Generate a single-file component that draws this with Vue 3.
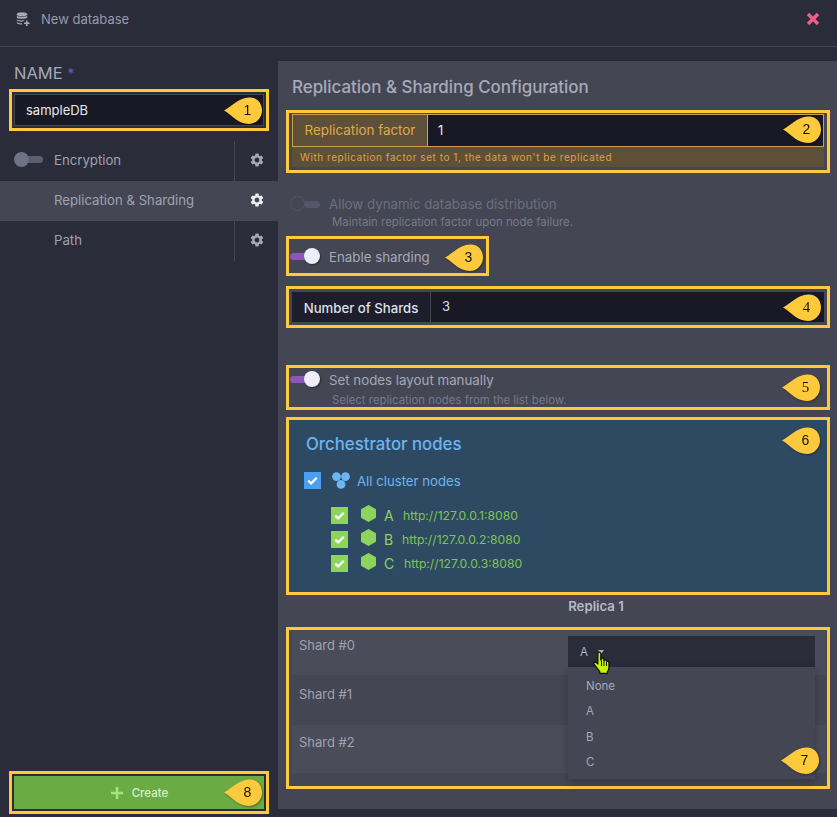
<script setup>
const menu = [
  { label: 'Encryption', toggle: true },
  { label: 'Replication & Sharding', active: true },
  { label: 'Path' }
]

const nodes = [
  { tag: 'A', url: 'http://127.0.0.1:8080', shift: 0 },
  { tag: 'B', url: 'http://127.0.0.2:8080', shift: -1 },
  { tag: 'C', url: 'http://127.0.0.3:8080', shift: 1 }
]

const shards = ['Shard #0', 'Shard #1', 'Shard #2']
const options = ['None', 'A', 'B', 'C']

const gear = 'M19.14 12.94c.04-.3.06-.61.06-.94 0-.32-.02-.64-.07-.94l2.03-1.58c.18-.14.23-.41.12-.61l-1.92-3.32c-.12-.22-.37-.29-.59-.22l-2.39.96c-.5-.38-1.03-.7-1.62-.94l-.36-2.54c-.04-.24-.24-.41-.48-.41h-3.84c-.24 0-.43.17-.47.41l-.36 2.54c-.59.24-1.13.57-1.62.94l-2.39-.96c-.22-.08-.47 0-.59.22L2.74 8.87c-.12.21-.08.47.12.61l2.03 1.58c-.05.3-.09.63-.09.94s.02.64.07.94l-2.03 1.58c-.18.14-.23.41-.12.61l1.92 3.32c.12.22.37.29.59.22l2.39-.96c.5.38 1.03.7 1.62.94l.36 2.54c.05.24.24.41.48.41h3.84c.24 0 .44-.17.47-.41l.36-2.54c.59-.24 1.13-.56 1.62-.94l2.39.96c.22.08.47 0 .59-.22l1.92-3.32c.12-.22.07-.47-.12-.61l-2.01-1.58zM12 15.6c-1.98 0-3.6-1.62-3.6-3.6s1.62-3.6 3.6-3.6 3.6 1.62 3.6 3.6-1.62 3.6-3.6 3.6z'
const drop = 'M0 13.5C8 9.5 14 1 25 .5 33 0 38 6 38 13.5 38 21 32 27 25 27 14 27 8 18 0 13.5Z'
</script>

<template>
  <div class="app">
    <header class="top">
      <div class="top-title">
        <svg class="db-icon" viewBox="0 0 14 14" width="14" height="14">
          <ellipse cx="6" cy="2.2" rx="5.2" ry="2" fill="#a6a8b6" />
          <path d="M.8 3.8c1 1.4 9.400 1.400 10.400 0v2C10.200 7.200 1.800 7.200.8 5.800z" fill="#a6a8b6" />
          <path d="M.8 7.200c1 1.400 6.500 1.500 8 .6L7 9.500c-3 .4-5.400-.2-6.200-1z" fill="#a6a8b6" />
          <path d="M.8 10c1 .9 3.200 1.300 5.200 1.200v1.300c-2.400 0-4.400-.5-5.200-1.300z" fill="#a6a8b6" />
          <path d="M10 8.500h1.600v2h2v1.500h-2v2H10v-2H8v-1.500h2z" fill="#a6a8b6" />
        </svg>
        <span>New database</span>
      </div>
      <svg class="close" viewBox="0 0 14 14" width="14" height="14">
        <path d="M2 2l10 10M12 2L2 12" stroke="#ef5f85" stroke-width="3.400" />
      </svg>
    </header>

    <div class="main">
      <aside class="side">
        <div class="name-label">NAME <span class="star">*</span></div>
        <div class="mark name-mark">
          <div class="name-input">sampleDB</div>
          <span class="drop drop-name">
            <svg viewBox="0 0 38 27"><path :d="drop" /></svg><b>1</b>
          </span>
        </div>

        <nav class="menu">
          <div v-for="item in menu" :key="item.label" class="menu-row" :class="{ active: item.active }">
            <span v-if="item.toggle" class="tog-off"><i></i></span>
            <span class="menu-label">{{ item.label }}</span>
            <span class="menu-gear">
              <svg viewBox="0 0 24 24" width="16" height="16"><path :d="gear" /></svg>
            </span>
          </div>
        </nav>

        <div class="mark create-mark">
          <button class="create">
            <svg viewBox="0 0 14 14" width="14" height="14"><path d="M7 1v12M1 7h12" stroke="#a5e57b" stroke-width="2.600" /></svg>
            <span>Create</span>
          </button>
          <span class="drop drop-name">
            <svg viewBox="0 0 38 27"><path :d="drop" /></svg><b>8</b>
          </span>
        </div>
      </aside>

      <section class="panel">
        <h2 class="title">Replication &amp; Sharding Configuration</h2>

        <div class="mark box-repl">
          <div class="warn">
            <div class="warn-row">
              <span class="warn-label">Replication factor</span>
              <span class="warn-value">1</span>
            </div>
            <p class="warn-text">With replication factor set to 1, the data won't be replicated</p>
          </div>
          <span class="drop drop-wide">
            <svg viewBox="0 0 38 27"><path :d="drop" /></svg><b>2</b>
          </span>
        </div>

        <div class="dynamic">
          <div class="switch-row">
            <span class="tog-dis"><i></i></span>
            <span class="dis-label">Allow dynamic database distribution</span>
          </div>
          <p class="dis-sub">Maintain replication factor upon node failure.</p>
        </div>

        <div class="mark box-shard">
          <span class="tog-on"><i></i></span>
          <span class="switch-label">Enable sharding</span>
          <span class="drop drop-3">
            <svg viewBox="0 0 38 27"><path :d="drop" /></svg><b>3</b>
          </span>
        </div>

        <div class="mark box-count">
          <div class="count">
            <span class="count-label">Number of Shards</span>
            <span class="count-value">3</span>
          </div>
          <span class="drop drop-4">
            <svg viewBox="0 0 38 27"><path :d="drop" /></svg><b class="serif">4</b>
          </span>
        </div>

        <div class="mark box-layout">
          <div class="switch-row">
            <span class="tog-on"><i></i></span>
            <span class="switch-label">Set nodes layout manually</span>
          </div>
          <p class="layout-sub">Select replication nodes from the list below.</p>
          <span class="drop drop-5">
            <svg viewBox="0 0 38 27"><path :d="drop" /></svg><b class="serif">5</b>
          </span>
        </div>

        <div class="mark box-nodes">
          <h3 class="orch">Orchestrator nodes</h3>
          <div class="all-row">
            <span class="check blue">
              <svg viewBox="0 0 16 16"><path d="M4 8.200l2.700 2.600L12 5.400" /></svg>
            </span>
            <svg class="cluster" viewBox="0 0 18 17" width="18" height="17">
              <circle cx="4.500" cy="4.600" r="4.400" />
              <circle cx="13.500" cy="4.600" r="4.400" />
              <circle cx="9" cy="12.400" r="4.400" />
            </svg>
            <span class="all-label">All cluster nodes</span>
          </div>
          <div v-for="node in nodes" :key="node.tag" class="node-row">
            <span class="check green">
              <svg viewBox="0 0 16 16"><path d="M4 8.200l2.700 2.600L12 5.400" /></svg>
            </span>
            <svg class="hex" viewBox="0 0 15 17" width="15" height="17">
              <path d="M7.500 0l7.500 4.250v8.500L7.500 17 0 12.750v-8.500z" />
            </svg>
            <span class="node-tag">{{ node.tag }}</span>
            <span class="node-url" :style="{ marginLeft: 9 + node.shift + 'px' }">{{ node.url }}</span>
          </div>
          <span class="drop drop-6">
            <svg viewBox="0 0 38 27"><path :d="drop" /></svg><b>6</b>
          </span>
        </div>

        <div class="replica">Replica 1</div>

        <div class="mark box-shards">
          <div v-for="shard in shards" :key="shard" class="shard-row">{{ shard }}</div>
          <div class="select">
            <div class="select-head">
              <span>A</span>
              <i class="caret"></i>
            </div>
            <ul class="select-menu">
              <li v-for="opt in options" :key="opt">{{ opt }}</li>
            </ul>
            <svg class="hand" viewBox="0 0 18 24" width="18" height="24">
              <path d="M5.500 1.500c1-.8 2.300-.2 2.300 1V9l.7.100V7.600c.6-1 1.900-.9 2.300.2v1.700l.5.100c.5-1 1.900-1 2.300.1l.3.700c.7-.5 2 0 2 1.100v5.500c0 1.500-.5 2.700-1.500 3.500v1.900H6.800v-1.800C5 18.500 3.200 15.800 1 13.200c-.7-1.300.6-2.600 1.900-1.800l2 1.700V2.900c0-.6.200-1.100.6-1.400z" fill="#c6f500" stroke="#111" stroke-width="1.200" stroke-linejoin="round" />
              <path d="M8.500 10v5M11 10v5M13.500 11v4" stroke="#111" stroke-width="1" fill="none" />
            </svg>
          </div>
          <span class="drop drop-7">
            <svg viewBox="0 0 38 27"><path :d="drop" /></svg><b>7</b>
          </span>
        </div>
      </section>
    </div>
  </div>
</template>

<style>
html, body { margin: 0; background: #2a2c3a; }
</style>

<style scoped>
.app { width: 837px; height: 817px; overflow: hidden; background: #2a2c3a; color: #a6a8b8; font-family: Inter, "Noto Sans", sans-serif; display: flex; flex-direction: column; }
.top { height: 38px; flex: none; display: flex; align-items: center; justify-content: space-between; padding: 0 17px 8px 16px; border-bottom: 1px solid #444653; }
.top-title { display: flex; align-items: center; gap: 11px; font-size: 13px; color: #989aaa; }
.db-icon { display: block; }
.close { display: block; }
.main { flex: 1; display: flex; min-height: 0; }

.side { width: 278px; flex: none; display: flex; flex-direction: column; padding-bottom: 3px; box-sizing: border-box; }
.name-label { font-size: 16.500px; line-height: 20px; margin: 16px 0 5px 14px; color: #a6a8b8; font-weight: 400; }
.star { color: #7f4fb0; font-size: 14px; }

.mark { position: relative; border: 3px solid #ffc93c; box-sizing: border-box; }
.drop { position: absolute; width: 38px; height: 27px; display: block; filter: drop-shadow(1px 1px 1px rgba(0, 0, 0, .35)); }
.drop svg { display: block; width: 38px; height: 27px; fill: #ffc93c; }
.drop b { position: absolute; left: 9px; right: 0; top: 0; line-height: 27px; text-align: center; font-size: 14px; font-weight: 400; color: #111; font-family: "Liberation Sans", sans-serif; }
.drop b.serif { font-family: "Liberation Serif", serif; font-size: 15px; }

.name-mark { margin-left: 9px; width: 260px; height: 42px; padding: 2px; }
.name-input { height: 32px; box-sizing: border-box; background: #191926; border: 1px solid #444653; color: #e8e8f0; font-size: 13px; line-height: 30px; padding-left: 11px; }
.drop-name { right: 4px; top: 5px; }

.menu { margin-top: 10px; }
.menu-row { position: relative; height: 40px; display: flex; align-items: center; padding-bottom: 2px; box-sizing: border-box; font-size: 13.200px; color: #a0a2b2; }
.menu-row.active { background: #444653; }
.menu-label { position: absolute; left: 54px; }
.menu-gear { position: absolute; left: 234px; top: 0; bottom: 0; width: 44px; display: flex; align-items: center; justify-content: center; padding-bottom: 2px; border-left: 1px solid #444653; box-sizing: border-box; }
.menu-gear svg { fill: #a6a8b8; }
.menu-row.active .menu-gear { border-left-color: transparent; }
.menu-row.active .menu-gear svg { fill: #eeeef4; }

.tog-off { position: absolute; left: 14px; top: 11px; width: 29px; height: 16px; }
.tog-off::before { content: ""; position: absolute; left: 10px; right: 0; top: 4px; height: 7px; border-radius: 4px; background: #5c5e70; }
.tog-off i { position: absolute; left: 0; top: 0; width: 15px; height: 15px; border-radius: 50%; background: #6f7186; }

.create-mark { margin: auto 0 0 9px; width: 260px; height: 43px; padding: 2px; }
.create { width: 100%; height: 100%; border: 0; background: #6aac43; color: #dcecd2; font: 500 11.500px Inter, sans-serif; display: flex; align-items: center; justify-content: center; gap: 8px; padding: 0; }
.create svg { display: block; }

.panel { flex: 1; background: #444653; margin: 14px 0 8px; padding: 14px 7px 0 8px; box-sizing: border-box; min-width: 0; }
.title { margin: 0 0 11px 6px; font-size: 16.900px; line-height: 24px; font-weight: 500; color: #a8aaba; }

.box-repl { height: 63px; padding: 1px 3px 3px 3px; }
.warn { background: #5e5038; height: 100%; }
.warn-row { height: 33px; box-sizing: border-box; border: 1px solid #c9a055; display: flex; }
.warn-label { width: 135px; flex: none; box-sizing: border-box; border-right: 1px solid #c9a055; color: #e0a84e; font-size: 13.400px; line-height: 31px; text-align: center; }
.warn-value { flex: 1; background: #191926; color: #e8e8f0; font-size: 13px; line-height: 30px; padding-left: 10px; }
.warn-text { margin: 0; font-size: 10px; line-height: 20px; color: #d9a24a; padding-left: 8px; letter-spacing: .55px; white-space: nowrap; }
.drop-wide { right: 6px; top: 3px; }
.drop-4 { right: 6px; top: 5px; }
.drop-5 { right: 7px; top: 6px; }
.drop-6 { right: 7px; top: 7px; }

.dynamic { margin: 21px 0 6px; height: 36px; padding-left: 4px; }
.switch-row { display: flex; align-items: center; gap: 9px; height: 20px; }
.dis-label { font-size: 13.300px; color: #6d6f80; }
.dis-sub { margin: -1px 0 0; font-size: 11.400px; line-height: 18px; color: #777989; padding-left: 42px; }
.tog-dis { position: relative; width: 30px; height: 16px; flex: none; }
.tog-dis::before { content: ""; position: absolute; left: 14px; right: 0; top: 5px; height: 7px; border-radius: 4px; background: #555768; }
.tog-dis i { position: absolute; left: 0; top: 0; width: 13px; height: 13px; border-radius: 50%; border: 1.500px solid #555768; background: #444653; }

.tog-on { position: relative; width: 30px; height: 18px; flex: none; display: block; }
.tog-on::before { content: ""; position: absolute; left: 0; right: 8px; top: 5px; height: 7px; border-radius: 4px; background: #8e56b8; }
.tog-on i { position: absolute; right: 0; top: 0; width: 16px; height: 16px; border-radius: 50%; background: #eeeef6; box-shadow: 1px 1px 2px rgba(0, 0, 0, .4); }
.switch-label { font-size: 13.300px; color: #a6a8b8; }

.box-shard { width: 203px; height: 40px; display: flex; align-items: center; gap: 9px; padding: 2px 0 0 1px; }
.drop-3 { right: 3px; top: 5px; }

.box-count { margin-top: 10px; height: 42px; padding: 3px; }
.count { display: flex; height: 30px; background: #191926; }
.count-label { width: 139px; flex: none; box-sizing: border-box; border-right: 1px solid #444653; background: #1d1d2b; color: #dfe0e8; font-size: 13.200px; font-weight: 500; line-height: 33px; text-align: center; }
.count-value { color: #dfe0e8; font-size: 13px; line-height: 29px; padding-left: 11px; }

.box-layout { margin-top: 37px; height: 45px; padding: 1px 0 0 1px; }
.box-layout .switch-row { height: 22px; gap: 9px; }
.layout-sub { margin: 0; font-size: 11.400px; line-height: 18px; color: #777989; padding-left: 42px; }

.box-nodes { margin-top: 7px; height: 178px; background: #2e4a62; padding: 0 0 0 15px; }
.orch { margin: 0; padding: 12px 0 0 2px; font-size: 16.800px; line-height: 24px; font-weight: 500; color: #6cb4f2; }
.all-row { display: flex; align-items: center; margin-top: 16px; height: 17px; }
.all-label { font-size: 13.200px; color: #6cb4f2; margin-left: 7px; }
.cluster { margin-left: 11px; fill: #6cb4f2; display: block; }
.check { width: 17px; height: 17px; flex: none; display: block; }
.check svg { display: block; width: 17px; height: 17px; fill: none; stroke: #fff; stroke-width: 2.200; }
.check.blue { background: #4a9ff0; }
.check.green { background: #8dd45a; }
.node-row { display: flex; align-items: center; height: 24px; margin-left: 27px; color: #8dd45a; }
.all-row + .node-row { margin-top: 14px; }
.hex { margin: -3px 0 0 13px; fill: #8dd45a; display: block; }
.node-tag { font-size: 14px; margin-left: 8px; width: 10px; }
.node-url { font-size: 12.200px; color: #7fc64e; }

.replica { height: 32px; line-height: 23px; text-align: center; font-size: 13.200px; font-weight: 600; color: #b9bac6; padding-left: 76px; }

.box-shards { height: 162px; padding: 0 1px 0 3px; }
.shard-row { height: 48px; box-sizing: border-box; padding: 9px 0 0 7px; font-size: 13px; line-height: 16px; color: #a0a2b2; background: #4a4c59; }
.shard-row:nth-child(1) { height: 45px; padding-top: 7px; }
.shard-row:nth-child(2) { background: #444653; height: 50px; padding-top: 11px; }
.select { position: absolute; left: 279px; top: 6px; width: 247px; }
.select-head { height: 31px; box-sizing: border-box; padding: 1px 0 0 12px; background: #2a2c3a; display: flex; align-items: center; gap: 10px; font-size: 11.500px; color: #b0b2c0; }
.caret { width: 0; height: 0; border: 3.500px solid transparent; border-top: 4px solid #b0b2c0; border-bottom: 0; display: block; }
.select-menu { margin: 0; padding: 7px 0 3px; list-style: none; height: 112px; box-sizing: border-box; background: #444653; box-shadow: 0 3px 8px rgba(0, 0, 0, .25); }
.select-menu li { height: 25.400px; line-height: 25px; padding-left: 18px; font-size: 11.500px; color: #a6a8b8; }
.hand { position: absolute; left: 25px; top: 15px; display: block; }
.drop-7 { right: 8px; top: 117px; }
</style>
